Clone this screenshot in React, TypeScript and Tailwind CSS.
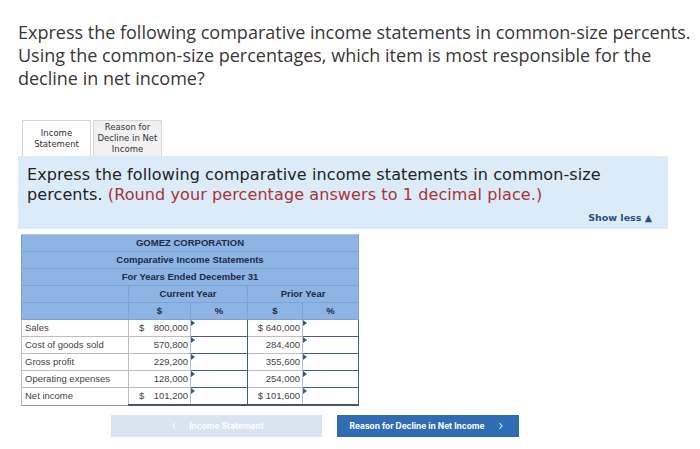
import { ChevronLeft, ChevronRight } from "lucide-react";

type Row = {
  label: string;
  cur: string;
  curSign?: boolean;
  prior: string;
};

const rows: Row[] = [
  { label: "Sales", cur: "800,000", curSign: true, prior: "$ 640,000" },
  { label: "Cost of goods sold", cur: "570,800", prior: "284,400" },
  { label: "Gross profit", cur: "229,200", prior: "355,600" },
  { label: "Operating expenses", cur: "128,000", prior: "254,000" },
  { label: "Net income", cur: "101,200", curSign: true, prior: "$ 101,600" },
];

function InputCell({ last }: { last: boolean }) {
  return (
    <td className={`relative p-0 border border-[#3d5f8f] bg-white ${last ? "border-b-2 border-b-[#4a5563]" : ""}`}>
      <span className="absolute left-0 top-0 w-0 h-0 border-t-[3px] border-b-[3px] border-l-[4px] border-t-transparent border-b-transparent border-l-[#2f5fa0]" />
      <div className="h-[16px]" />
    </td>
  );
}

export default function App() {
  return (
    <div className="w-[700px] h-[449px] bg-white overflow-hidden" style={{ fontFamily: "'Open Sans', Lato, sans-serif" }}>
      <p className="pl-[18px] pt-[21px] text-[18px] leading-[23px] text-[#383838]">
        Express the following comparative income statements in common-size percents.
        <br />
        Using the common-size percentages, which item is most responsible for the
        <br />
        decline in net income?
      </p>

      <div className="flex ml-[22px] mt-[30px] gap-[2px] font-['DejaVu_Sans',sans-serif] text-[8.5px] leading-[11px] text-[#333]">
        <div className="w-[69px] h-[36px] border border-b-0 border-[#d6d6d6] bg-white flex items-center justify-center text-center">
          Income
          <br />
          Statement
        </div>
        <div className="w-[69px] h-[36px] border border-b-0 border-[#d6d6d6] bg-[#f1f1f1] flex items-center justify-center text-center">
          Reason for
          <br />
          Decline in Net
          <br />
          Income
        </div>
      </div>

      <div className="ml-[18px] w-[650px] h-[73px] bg-[#dcebf8] pl-[9px] pt-[9px] pr-[16px] font-['DejaVu_Sans',sans-serif]">
        <p className="text-[16px] leading-[20px] text-[#222] tracking-[0.1px]">
          Express the following comparative income statements in common-size
          <br />
          percents. <span className="text-[#a83434]">(Round your percentage answers to 1 decimal place.)</span>
        </p>
        <div className="flex justify-end mt-[6px] text-[9.5px] font-bold text-[#2b4f7e]">Show less ▲</div>
      </div>

      <table
        className="ml-[21px] mt-[5px] border-collapse text-[9.5px] leading-[16px]"
        style={{ fontFamily: "'Liberation Sans', Arial, sans-serif" }}
      >
        <colgroup>
          <col className="w-[107px]" />
          <col className="w-[62px]" />
          <col className="w-[57px]" />
          <col className="w-[55px]" />
          <col className="w-[56px]" />
        </colgroup>
        <thead className="bg-[#8db4e3] text-[#1e2b45] font-bold">
          <tr>
            <th colSpan={5} className="h-[17px] border border-[#7ca3d6] border-t-[#a8c6ec] p-0">GOMEZ CORPORATION</th>
          </tr>
          <tr>
            <th colSpan={5} className="h-[17px] border border-[#7ca3d6] border-t-[#b0cbee] p-0">Comparative Income Statements</th>
          </tr>
          <tr>
            <th colSpan={5} className="h-[17px] border border-[#7ca3d6] border-t-[#b0cbee] p-0">For Years Ended December 31</th>
          </tr>
          <tr>
            <th className="h-[17px] border border-[#7ca3d6] border-t-[#b0cbee] p-0" />
            <th colSpan={2} className="border border-[#7ca3d6] border-t-[#b0cbee] p-0">Current Year</th>
            <th colSpan={2} className="border border-[#7ca3d6] border-t-[#b0cbee] p-0">Prior Year</th>
          </tr>
          <tr>
            <th className="h-[17px] border border-[#7ca3d6] border-t-[#b0cbee] p-0" />
            <th className="border border-[#7ca3d6] border-t-[#b0cbee] p-0">$</th>
            <th className="border border-[#7ca3d6] border-t-[#b0cbee] p-0">%</th>
            <th className="border border-[#7ca3d6] border-t-[#b0cbee] p-0">$</th>
            <th className="border border-[#7ca3d6] border-t-[#b0cbee] p-0">%</th>
          </tr>
        </thead>
        <tbody className="text-[#444]">
          {rows.map((r, i) => {
            const last = i === rows.length - 1;
            return (
              <tr key={r.label} className="h-[17px]">
                <td className={`border border-[#bdbdbd] pl-[3px] p-0 ${last ? "border-b-[#999]" : ""}`}>{r.label}</td>
                <td className={`border border-[#bdbdbd] px-[2px] py-0 ${last ? "border-b-2 border-b-[#4a5563]" : ""}`}>
                  {r.curSign ? (
                    <div className="flex justify-between pl-[8px]">
                      <span>$</span>
                      <span>{r.cur}</span>
                    </div>
                  ) : (
                    <div className="text-right">{r.cur}</div>
                  )}
                </td>
                <InputCell last={last} />
                <td className={`border border-[#bdbdbd] px-[2px] py-0 text-right ${last ? "border-b-2 border-b-[#4a5563]" : ""}`}>
                  {r.prior}
                </td>
                <InputCell last={last} />
              </tr>
            );
          })}
        </tbody>
      </table>

      <div className="flex ml-[111px] mt-[9px] gap-[15px] text-[8.4px] font-bold" style={{ fontFamily: "Inter, sans-serif" }}>
        <button className="w-[211px] h-[22px] bg-[#d9e4f1] text-white flex items-center justify-center gap-[10px]">
          <ChevronLeft size={10} strokeWidth={2.5} />
          <span>Income Statement</span>
        </button>
        <button className="w-[182px] h-[22px] bg-[#2f6cb4] text-white flex items-center justify-center gap-[12px]">
          <span>Reason for Decline in Net Income</span>
          <ChevronRight size={10} strokeWidth={2.5} />
        </button>
      </div>
    </div>
  );
}
